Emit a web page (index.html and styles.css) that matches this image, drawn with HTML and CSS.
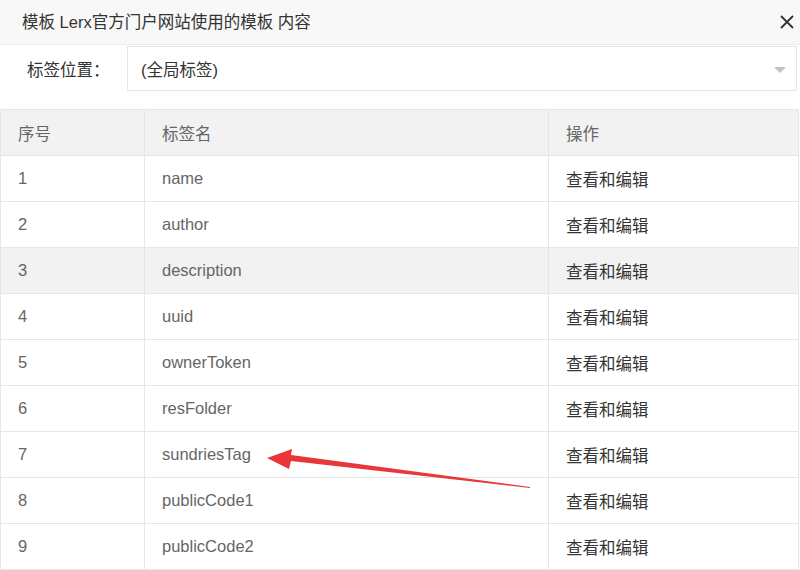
FILE: index.html
```html
<!DOCTYPE html>
<html lang="zh-CN">
<head>
    <meta charset="UTF-8">
    <title>模板内容</title>
    <link rel="stylesheet" href="styles.css">
</head>
<body>

    <div class="layer">
        <div class="layer-title">
            <span>模板 Lerx官方门户网站使用的模板 内容</span>
            <span class="layer-close">
                <svg width="16" height="16" viewBox="0 0 16 16"><path d="M2 2 L14 14 M14 2 L2 14" stroke="#333" stroke-width="1.8" fill="none"/></svg>
            </span>
        </div>

        <div class="form-row">
            <label class="form-label">标签位置：</label>
            <div class="select-box">
                <span>(全局标签)</span>
                <span class="select-arrow"></span>
            </div>
        </div>

        <table class="tag-table">
            <colgroup>
                <col class="col-no">
                <col class="col-name">
                <col class="col-op">
            </colgroup>
            <thead>
                <tr><th>序号</th><th>标签名</th><th>操作</th></tr>
            </thead>
            <tbody>
                <tr><td>1</td><td>name</td><td class="op">查看和编辑</td></tr>
                <tr><td>2</td><td>author</td><td class="op">查看和编辑</td></tr>
                <tr class="hover"><td>3</td><td>description</td><td class="op">查看和编辑</td></tr>
                <tr><td>4</td><td>uuid</td><td class="op">查看和编辑</td></tr>
                <tr><td>5</td><td>ownerToken</td><td class="op">查看和编辑</td></tr>
                <tr><td>6</td><td>resFolder</td><td class="op">查看和编辑</td></tr>
                <tr><td>7</td><td>sundriesTag</td><td class="op">查看和编辑</td></tr>
                <tr><td>8</td><td>publicCode1</td><td class="op">查看和编辑</td></tr>
                <tr><td>9</td><td>publicCode2</td><td class="op">查看和编辑</td></tr>
            </tbody>
        </table>

        <!-- 标注箭头 -->
        <svg class="mark-arrow" width="800" height="570" viewBox="0 0 800 570">
            <polygon points="530,488 291,461 289,469 267,458 292,449 291,455 530,487" fill="#e8363a"/>
        </svg>
    </div>

</body>
</html>
```

FILE: styles.css
```css
body {
    margin: 0;
    font-family: "Liberation Sans", "Noto Sans CJK SC", sans-serif;
    font-size: 16.5px;
    color: #333;
    background: #fff;
}

.layer {
    position: relative;
    width: 800px;
    height: 570px;
    overflow: hidden;
}

.layer-title {
    height: 45px;
    padding: 0 0 3px 22px;
    background: #f8f8f8;
    border-bottom: 1px solid #eee;
    display: flex;
    align-items: center;
    justify-content: space-between;
    color: #333;
    box-sizing: border-box;
}

.layer-close {
    display: flex;
    width: 18px;
    margin-right: 3px;
    margin-top: 3px;
}

.form-row {
    display: flex;
    align-items: center;
    height: 45px;
    margin-top: 1px;
}

.form-label {
    width: 127px;
    padding-left: 27px;
    box-sizing: border-box;
    color: #333;
}

.select-box {
    flex: 1;
    height: 45px;
    margin-right: 3px;
    border: 1px solid #e6e6e6;
    box-sizing: border-box;
    display: flex;
    align-items: center;
    justify-content: space-between;
    padding: 0 10px 0 13px;
    color: #333;
}

.select-arrow {
    width: 0;
    height: 0;
    border-left: 6px solid transparent;
    border-right: 6px solid transparent;
    border-top: 6px solid #c2c2c2;
    margin-top: 2px;
}

.tag-table {
    margin-top: 18px;
    width: 798px;
    border-collapse: collapse;
    table-layout: fixed;
}

.col-no { width: 144px; }
.col-name { width: 404px; }
.col-op { width: 250px; }

.tag-table th,
.tag-table td {
    height: 46px;
    padding: 0 17px;
    border: 1px solid #e6e6e6;
    text-align: left;
    font-weight: normal;
    color: #666;
    box-sizing: border-box;
}

.tag-table th {
    background: #f2f2f2;
}

.tag-table td.op {
    color: #333;
}

.tag-table tr.hover td {
    background: #f2f2f2;
}

.mark-arrow {
    position: absolute;
    left: 0;
    top: 0;
    pointer-events: none;
}
```
